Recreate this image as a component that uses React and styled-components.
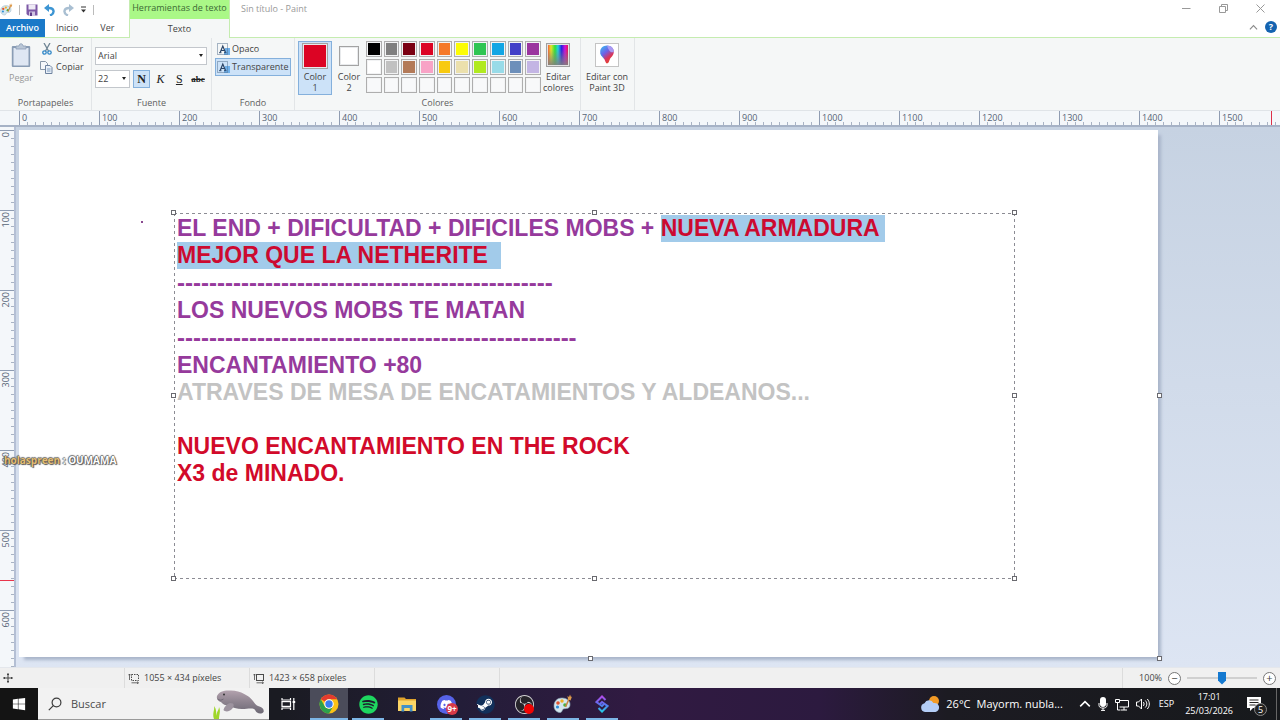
import React, { useState } from 'react';
import styled, { createGlobalStyle, css } from 'styled-components';
import { FaSpotify, FaDiscord, FaSteam, FaWindows } from 'react-icons/fa';
import { SiObsstudio } from 'react-icons/si';

const PALETTE = [
    '#000000', '#7f7f7f', '#7a0012', '#dc0424', '#f5792a', '#fcfc04', '#2fc552', '#12a6e4', '#4340c8', '#9a349f',
    '#ffffff', '#c1c1c1', '#b37a58', '#f8a3c6', '#f8ca10', '#ebe0ac', '#b0ea20', '#98dbe8', '#6d8fba', '#c3b5e4',
];
const EMPTY = Array.from({ length: 10 }, (_, i) => i);
const H_MARKS = Array.from({ length: 16 }, (_, i) => i * 100);
const V_MARKS = Array.from({ length: 7 }, (_, i) => i * 100);

/* ---------- icons ---------- */

const PaintIcon = ({ size }) => (
    <svg width={size} height={size} viewBox="0 0 20 20">
        <path d="M9 4C4 4 1 7.500 1 12c0 4 3 6.500 6 6.500 2.500 0 1.500-2.500 3.500-3.500 2-.8 6 .5 6.500-4C17.400 7 14 4 9 4z" fill="#d5e6ee" stroke="#8aa7b5" strokeWidth=".6" />
        <circle cx="5" cy="9" r="1.800" fill="#e2552f" />
        <circle cx="9" cy="7" r="1.700" fill="#f2b021" />
        <circle cx="4.500" cy="13" r="1.600" fill="#2d8fd8" />
        <circle cx="12" cy="11" r="1.800" fill="#4caf3f" />
        <path d="M12.500 13L16 5" stroke="#c98443" strokeWidth="1.600" />
        <path d="M15 5.500L14.500 2l1.500 1 1-2.500 1 2.500 1-.5-1.500 4z" fill="#dd9a4b" />
    </svg>
);

const SaveIcon = () => (
    <svg width="12" height="12" viewBox="0 0 12 12">
        <path d="M.5.5h11v11H2L.5 10z" fill="#7d58a6" />
        <path d="M2.500.5h7v5h-7z" fill="#eeeaf5" />
        <path d="M3 7.500h6V12H3z" fill="#cfc3e0" />
        <path d="M4 8.500h2V12H4z" fill="#5d3b87" />
    </svg>
);

const UndoIcon = ({ color, flip }) => (
    <svg width="12" height="12" viewBox="0 0 12 12">
        <path d={flip ? 'M6 11.500C1 9.500 1 3.500 8 4' : 'M6 11.500C11 9.500 11 3.500 4 4'} fill="none" stroke={color} strokeWidth="2.400" />
        <path d={flip ? 'M7 0v8l5-4z' : 'M5 0v8L0 4z'} fill={color} />
    </svg>
);

const QuickMenuIcon = () => (
    <svg width="7" height="7" viewBox="0 0 7 7">
        <path d="M1 1h5" stroke="#333" />
        <path d="M1 3.500h5L3.500 6.500z" fill="#333" />
    </svg>
);

const PasteIcon = () => (
    <svg width="20" height="25" viewBox="0 0 20 25">
        <rect x=".8" y="3" width="18.400" height="21" rx="1" fill="#8a9db5" />
        <rect x="2.500" y="5" width="15" height="17.500" fill="#dfe7f3" />
        <path d="M5 6V3h3c0-3 4-3 4 0h3v3z" fill="#b9c6d6" stroke="#8a9db5" strokeWidth=".8" />
    </svg>
);

const CutIcon = () => (
    <svg width="10" height="12" viewBox="0 0 10 12">
        <path d="M2 0l4.500 8M8 0L3.500 8" stroke="#6f8594" strokeWidth="1.300" />
        <circle cx="2.500" cy="9.500" r="1.700" fill="none" stroke="#2f86c6" strokeWidth="1.300" />
        <circle cx="7.500" cy="9.500" r="1.700" fill="none" stroke="#2f86c6" strokeWidth="1.300" />
    </svg>
);

const CopyIcon = () => (
    <svg width="13" height="13" viewBox="0 0 13 13">
        <path d="M.5.5h5l2 2v6h-7z" fill="#f4f7fa" stroke="#8696a8" />
        <path d="M5.500 4.500h4.500l2 2v6H5.500z" fill="#e9f0f8" stroke="#6e83a0" />
        <path d="M7 8h3.500M7 10h3.500" stroke="#7f9dc0" />
    </svg>
);

const TextBackIcon = () => (
    <svg width="13" height="13" viewBox="0 0 13 13">
        <rect x="8" y="5" width="5" height="7" fill="#6fb0ea" />
        <path d="M7 9h3v3H7z" fill="#6fb0ea" />
        <rect x=".5" y=".5" width="10" height="11" fill="none" stroke="#54708f" strokeDasharray="1 1" />
        <path d="M3.200 9.500L5.800 3l2.700 6.500M4 7.500h3.500" fill="none" stroke="#2a4466" strokeWidth="1.200" />
        <path d="M2 9.700h2.500M7 9.700h2.500" stroke="#2a4466" strokeWidth=".9" />
    </svg>
);

const SpectrumIcon = () => (
    <svg width="24" height="24" viewBox="0 0 24 24">
        <defs>
            <linearGradient id="hue">
                <stop offset="0" stopColor="#f4603c" />
                <stop offset=".15" stopColor="#e8e428" />
                <stop offset=".35" stopColor="#2ee03a" />
                <stop offset=".5" stopColor="#23cfe0" />
                <stop offset=".68" stopColor="#2a1ee0" />
                <stop offset=".85" stopColor="#d010d8" />
                <stop offset="1" stopColor="#e81450" />
            </linearGradient>
            <linearGradient id="fade" x2="0" y2="1">
                <stop offset=".2" stopColor="#808080" stopOpacity="0" />
                <stop offset="1" stopColor="#808080" stopOpacity=".9" />
            </linearGradient>
        </defs>
        <rect x=".5" y=".5" width="23" height="23" fill="#e4e4e4" stroke="#a0a0a0" />
        <rect x="2" y="2" width="20" height="20" fill="url(#hue)" />
        <rect x="2" y="2" width="20" height="20" fill="url(#fade)" />
    </svg>
);

const Paint3DIcon = () => (
    <svg width="24" height="24" viewBox="0 0 24 24">
        <defs>
            <linearGradient id="drop" x1="0" y1="0" x2=".6" y2="1">
                <stop offset="0" stopColor="#35c6f4" />
                <stop offset=".45" stopColor="#6b62e8" />
                <stop offset=".75" stopColor="#d8355c" />
                <stop offset="1" stopColor="#e8452b" />
            </linearGradient>
        </defs>
        <rect x=".5" y=".5" width="23" height="23" fill="#fff" stroke="#c4c4c4" />
        <path d="M12 2.500c4 0 6.800 2.800 6.800 6.300 0 3.700-3 5.400-4 7.700-.7 1.700-1.300 4-2.800 4s-1.500-2.500-2.600-4.200C8 14 5.200 12.500 5.200 8.800 5.200 5.300 8 2.500 12 2.500z" fill="url(#drop)" />
        <path d="M12 2.500c4 0 6.800 2.800 6.800 6.300-2 1.500-5 0-6.800-6.300z" fill="#a99af2" />
        <path d="M5.200 9c1 3 3 4.500 4 6.500-2-1.500-4-3.500-4-6.500z" fill="#32a7ee" />
    </svg>
);

const SelectionSizeIcon = ({ dashed }) => (
    <svg width="12" height="11" viewBox="0 0 12 11">
        <rect x="3.500" y="1.500" width="7" height="6" fill="none" stroke="#4a4a4a" strokeDasharray={dashed ? '1.500 1' : undefined} />
        <path d="M1.500 1v6M.3 2.300L1.500 1l1.200 1.300M3.500 9.800h7M9 8.600l1.400 1.200L9 11" fill="none" stroke="#4a4a4a" strokeWidth=".8" />
    </svg>
);

const MoveIcon = () => (
    <svg width="10" height="10" viewBox="0 0 10 10">
        <path d="M5 0v10M0 5h10M4 1.500h2M4 8.500h2M1.500 4v2M8.500 4v2" stroke="#444" />
    </svg>
);

const SearchIcon = () => (
    <svg width="14" height="14" viewBox="0 0 14 14" fill="none" stroke="#3c3c3c" strokeWidth="1.200">
        <circle cx="8.500" cy="5.500" r="4.400" />
        <path d="M5.300 8.700L.8 13.200" />
    </svg>
);

const ManateeIcon = () => (
    <svg width="54" height="30" viewBox="0 0 54 30">
        <defs>
            <linearGradient id="skin" x2="0" y2="1">
                <stop offset="0" stopColor="#b3a2ae" />
                <stop offset=".5" stopColor="#8d838f" />
                <stop offset="1" stopColor="#6c6874" />
            </linearGradient>
        </defs>
        <path d="M3 30c-2-6 1-9 0-13 3 4 2 7 2 10 1-5 3-6 3-9 2 4 0 8 0 12z" fill="#9fd62a" />
        <path d="M6 7C8 2 14 1 20 1.500c10 .5 18 5 22 10.500 2 3 4 5 6.500 5.500 3 1 5 3.500 4 5.500-1.500 2-4.500 2-6.500.5-1.500-1-1.500-2.500-3-3.500-3-1-7 0-12 0-5 0-10-1.500-13-3.500-4 0-6-1-7.500-3C8.500 12.500 5 11 6 7z" fill="url(#skin)" />
        <path d="M19 14c-3 1-6 4-6.500 7 2 2.500 6 1.500 8.500-1 1.500-2 2.500-4 1-5.500z" fill="#9d939f" />
        <circle cx="13" cy="5.500" r="1" fill="#333" />
        <path d="M6.500 10c2 1.500 4 1.500 6 0" fill="none" stroke="#6a6270" strokeWidth=".8" />
    </svg>
);

const TaskViewIcon = () => (
    <svg width="15" height="14" viewBox="0 0 15 14" fill="none" stroke="#fff" strokeWidth="1.200">
        <path d="M1 1v2h8.500V1M1 13v-2h8.500v2" />
        <rect x="1" y="4.600" width="8.500" height="4.800" />
        <path d="M12.800 1v12" />
        <path d="M11.600 5h2.600" strokeWidth="2" />
    </svg>
);

const ChromeIcon = () => (
    <svg width="20" height="20" viewBox="0 0 20 20">
        <circle cx="10" cy="10" r="9.500" fill="#fbc116" />
        <path d="M10 .5a9.500 9.500 0 0 1 8.230 4.750H10a4.750 4.750 0 0 0-4.110 2.370L1.770 5.250A9.500 9.500 0 0 1 10 .5z" fill="#e33b2e" />
        <path d="M1.770 5.250a9.500 9.500 0 0 0 8.230 14.250l4.110-7.120a4.750 4.750 0 0 1-8.220 0z" fill="#2da14c" />
        <circle cx="10" cy="10" r="4.750" fill="#fff" />
        <circle cx="10" cy="10" r="3.700" fill="#3b7ded" />
    </svg>
);

const FolderIcon = () => (
    <svg width="18" height="16" viewBox="0 0 18 16">
        <path d="M0 1.500h6.500l1.500 1.500h10V8H0z" fill="#dfa32c" />
        <path d="M0 4.500h18V15H0z" fill="#fbd566" />
        <path d="M3.500 9h11v6.500h-2.700V12H6.200v3.500H3.500z" fill="#4391c8" />
    </svg>
);

const StreamIcon = () => (
    <svg width="14" height="18" viewBox="0 0 14 18">
        <defs>
            <linearGradient id="stream" x2="0" y2="1">
                <stop offset="0" stopColor="#b04ce8" />
                <stop offset=".5" stopColor="#5d6ff0" />
                <stop offset="1" stopColor="#27c9e8" />
            </linearGradient>
        </defs>
        <path d="M10.500 5L7 1.500 1.500 7l5.500 4 2-2M3.500 13L7 16.500l5.500-5.500L7 7 5 9" fill="none" stroke="url(#stream)" strokeWidth="2" />
    </svg>
);

const WeatherIcon = () => (
    <svg width="20" height="18" viewBox="0 0 20 18">
        <circle cx="14" cy="6" r="5" fill="#f29a26" />
        <path d="M5 17a4.500 4.500 0 0 1-.5-8.800 5 5 0 0 1 9-.2A4.600 4.600 0 0 1 15.500 17z" fill="#b4cdf7" />
    </svg>
);

const MicIcon = () => (
    <svg width="10" height="14" viewBox="0 0 10 14">
        <rect x="2" y="0" width="6" height="10" rx="3" fill="#fff" />
        <path d="M1 6v2.500c0 3.500 8 3.500 8 0V6M5 11v2.500M3 13.400h4" fill="none" stroke="#fff" />
    </svg>
);

const NetworkIcon = () => (
    <svg width="14" height="13" viewBox="0 0 14 13" fill="none" stroke="#fff">
        <path d="M5 2.500h8.500v6.500H4.500M9 9v3M6 12h6" />
        <path d="M.5 1.500h4v3h-4zM2.500 4.500v7.500h3" />
    </svg>
);

const VolumeIcon = () => (
    <svg width="14" height="12" viewBox="0 0 14 12" fill="none" stroke="#fff">
        <path d="M.5 4h2L5.500 1v10l-3-3h-2zM7.300 4c1 1 1 3 0 4M9.300 2.500c2 2 2 5 0 7M11.300 1c2.700 3 2.700 7 0 10" />
    </svg>
);

const NotesIcon = () => (
    <svg width="14" height="14" viewBox="0 0 14 14">
        <path d="M0 0h14v11H6l-3 3v-3H0z" fill="#fff" />
        <path d="M2.500 3h9M2.500 5.500h9M2.500 8h6" stroke="#222" />
    </svg>
);

const MinimizeIcon = () => <svg width="9" height="9" viewBox="0 0 9 9"><path d="M0 4.500h8.500" stroke="#999" /></svg>;
const RestoreIcon = () => (
    <svg width="9" height="9" viewBox="0 0 9 9" fill="none" stroke="#999">
        <path d="M.5 2.500h6v6h-6zM2.500 2.500v-2h6v6h-2" />
    </svg>
);
const CloseIcon = () => <svg width="9" height="9" viewBox="0 0 9 9"><path d="M.5.5l8 8M8.500.5l-8 8" stroke="#999" /></svg>;
const ChevronUp = ({ size, color }) => (
    <svg width={size} height={size} viewBox="0 0 10 10"><path d="M1 7l4-4 4 4" fill="none" stroke={color} strokeWidth="1.300" /></svg>
);

/* ---------- page ---------- */

const App = () => {
    const [font, setFont] = useState('Arial');
    const [size, setSize] = useState('22');
    const [zoom, setZoom] = useState(50);

    return (
        <Window>
            <GlobalStyle />
            <Header>
                <HeaderLeft>
                    <QuickAccess>
                        <PaintIcon size={13} />
                        <QuickLine />
                        <IconButton aria-label="Guardar"><SaveIcon /></IconButton>
                        <IconButton aria-label="Deshacer"><UndoIcon color="#3d95d3" /></IconButton>
                        <IconButton aria-label="Rehacer"><UndoIcon color="#a9bfd2" flip /></IconButton>
                        <IconButton aria-label="Personalizar"><QuickMenuIcon /></IconButton>
                        <QuickLine />
                    </QuickAccess>
                    <Tabs>
                        <FileTab>Archivo</FileTab>
                        <Tab>Inicio</Tab>
                        <Tab>Ver</Tab>
                    </Tabs>
                </HeaderLeft>
                <ContextTabs>
                    <ContextTitle>Herramientas de texto</ContextTitle>
                    <ActiveTab>Texto</ActiveTab>
                </ContextTabs>
                <HeaderRight>
                    <TitleRow>
                        <Title>Sin título - Paint</Title>
                        <WindowButtons>
                            <IconButton aria-label="Minimizar"><MinimizeIcon /></IconButton>
                            <IconButton aria-label="Restaurar"><RestoreIcon /></IconButton>
                            <IconButton aria-label="Cerrar"><CloseIcon /></IconButton>
                        </WindowButtons>
                    </TitleRow>
                    <HelpRow>
                        <IconButton aria-label="Contraer"><ChevronUp size={9} color="#8a8a8a" /></IconButton>
                        <Help>?</Help>
                    </HelpRow>
                </HeaderRight>
            </Header>

            <Ribbon>
                <Group $width={92}>
                    <GroupBody $pad={9}>
                        <BigButton $muted><PasteIcon />Pegar</BigButton>
                        <SmallButtons>
                            <SmallButton><CutIcon />Cortar</SmallButton>
                            <SmallButton><CopyIcon />Copiar</SmallButton>
                        </SmallButtons>
                    </GroupBody>
                    <GroupName>Portapapeles</GroupName>
                </Group>
                <Group $width={120}>
                    <FontBody>
                        <Combo>
                            <Select aria-label="Familia de fuente" value={font} onChange={(ev) => setFont(ev.target.value)}>
                                <option>Arial</option>
                            </Select>
                        </Combo>
                        <FontRow>
                            <Combo $width={35}>
                                <Select aria-label="Tamaño de fuente" value={size} onChange={(ev) => setSize(ev.target.value)}>
                                    <option>22</option>
                                </Select>
                            </Combo>
                            <StyleButton $on $weight="bold">N</StyleButton>
                            <StyleButton $slant="italic">K</StyleButton>
                            <StyleButton $line="underline">S</StyleButton>
                            <StyleButton $line="line-through" $weight="bold" $small>abc</StyleButton>
                        </FontRow>
                    </FontBody>
                    <GroupName>Fuente</GroupName>
                </Group>
                <Group $width={83}>
                    <BackBody>
                        <BackButton><TextBackIcon />Opaco</BackButton>
                        <BackButton $on><TextBackIcon />Transparente</BackButton>
                    </BackBody>
                    <GroupName>Fondo</GroupName>
                </Group>
                <Group $width={286}>
                    <GroupBody $pad={3}>
                        <ColorButton $on>
                            <ColorBox $size={26} $color="#dc0424" />
                            <span>Color</span>
                            <span>1</span>
                        </ColorButton>
                        <ColorButton>
                            <ColorBox $size={20} $color="#fff" />
                            <span>Color</span>
                            <span>2</span>
                        </ColorButton>
                        <Palette>
                            {PALETTE.map((color) => <Swatch key={color} $color={color} aria-label={color} />)}
                            {EMPTY.map((n) => <Swatch key={n} $color="#f8f9fa" aria-label="Vacío" />)}
                        </Palette>
                        <BigButton><SpectrumIcon /><span>Editar</span><span>colores</span></BigButton>
                    </GroupBody>
                    <GroupName>Colores</GroupName>
                </Group>
                <Group $width={54}>
                    <GroupBody $pad={0}>
                        <BigButton $wide><Paint3DIcon /><span>Editar con</span><span>Paint 3D</span></BigButton>
                    </GroupBody>
                </Group>
            </Ribbon>

            <TopRuler>
                {H_MARKS.map((n) => <HMark key={n}>{n}</HMark>)}
                <HCursor />
            </TopRuler>

            <Middle>
                <SideRuler>
                    {V_MARKS.map((n) => <VMark key={n}><span>{n}</span></VMark>)}
                    <VCursor />
                </SideRuler>
                <Workspace>
                    <Sheet>
                        <Speck />
                        <TextFrame>
                            <TextArea contentEditable suppressContentEditableWarning spellCheck={false} role="textbox" aria-label="Texto">
                                <Line>EL END + DIFICULTAD + DIFICILES MOBS + <Selected>NUEVA ARMADURA </Selected></Line>
                                <Line><Selected>MEJOR QUE LA NETHERITE{'  '}</Selected></Line>
                                <Rule>{'-'.repeat(47)}</Rule>
                                <Line>LOS NUEVOS MOBS TE MATAN</Line>
                                <Rule>{'-'.repeat(50)}</Rule>
                                <Line>ENCANTAMIENTO +80</Line>
                                <Line $color="#c3c3c3">ATRAVES DE MESA DE ENCATAMIENTOS Y ALDEANOS...</Line>
                                <Line><br /></Line>
                                <Line $color="#d20a2a">NUEVO ENCANTAMIENTO EN THE ROCK</Line>
                                <Line $color="#d20a2a">X3 de MINADO.</Line>
                            </TextArea>
                            <Handle $x="0%" $y="0%" />
                            <Handle $x="50%" $y="0%" />
                            <Handle $x="100%" $y="0%" />
                            <Handle $x="0%" $y="50%" />
                            <Handle $x="100%" $y="50%" />
                            <Handle $x="0%" $y="100%" />
                            <Handle $x="50%" $y="100%" />
                            <Handle $x="100%" $y="100%" />
                        </TextFrame>
                        <SheetHandle $x="100%" $y="50%" />
                        <SheetHandle $x="50%" $y="100%" />
                        <SheetHandle $x="100%" $y="100%" />
                    </Sheet>
                </Workspace>
                <Chat><ChatName>holaspreen</ChatName> : OUMAMA</Chat>
            </Middle>

            <StatusBar>
                <StatusCell><MoveIcon /></StatusCell>
                <StatusCell><SelectionSizeIcon dashed />1055 × 434 píxeles</StatusCell>
                <StatusCell><SelectionSizeIcon />1423 × 658 píxeles</StatusCell>
                <StatusCell />
                <ZoomCell>
                    <label htmlFor="zoom">100%</label>
                    <RoundButton aria-label="Alejar">−</RoundButton>
                    <Slider id="zoom" type="range" value={zoom} onChange={(ev) => setZoom(ev.target.value)} />
                    <RoundButton aria-label="Acercar">+</RoundButton>
                </ZoomCell>
            </StatusBar>

            <Taskbar>
                <StartButton aria-label="Inicio"><FaWindows size={14} /></StartButton>
                <Search>
                    <SearchIcon />
                    <SearchInput placeholder="Buscar" aria-label="Buscar" />
                    <ManateeIcon />
                </Search>
                <Apps>
                    <AppButton aria-label="Vista de tareas"><TaskViewIcon /></AppButton>
                    <AppButton aria-label="Chrome" $open $active><ChromeIcon /></AppButton>
                    <AppButton aria-label="Spotify" $open><FaSpotify size={19} color="#1ed760" /></AppButton>
                    <AppButton aria-label="Explorador"><FolderIcon /></AppButton>
                    <AppButton aria-label="Discord" $open>
                        <Disc $color="#5662e8"><FaDiscord size={13} color="#fff" /></Disc>
                        <RedBadge>9+</RedBadge>
                    </AppButton>
                    <AppButton aria-label="Steam" $open>
                        <SteamDisc><FaSteam size={19} color="#12305a" /></SteamDisc>
                    </AppButton>
                    <AppButton aria-label="OBS" $open>
                        <Disc $color="#26242a"><SiObsstudio size={19} color="#d2d0d4" /></Disc>
                        <RecDot />
                    </AppButton>
                    <AppButton aria-label="Paint" $open><PaintIcon size={20} /></AppButton>
                    <AppButton aria-label="Streamlabs" $open><StreamIcon /></AppButton>
                </Apps>
                <Tray>
                    <Weather><WeatherIcon /><span>26°C</span><span>Mayorm. nubla...</span></Weather>
                    <TrayIcons>
                        <ChevronUp size={12} color="#fff" />
                        <MicIcon />
                        <NetworkIcon />
                        <VolumeIcon />
                    </TrayIcons>
                    <Lang>ESP</Lang>
                    <Clock><span>17:01</span><span>25/03/2026</span></Clock>
                    <Notes aria-label="Notificaciones"><NotesIcon /><NotesCount>5</NotesCount></Notes>
                </Tray>
            </Taskbar>
        </Window>
    );
};

const GlobalStyle = createGlobalStyle`
    * {
        box-sizing: border-box;
    }
    body {
        margin: 0;
        font-family: "Open Sans", "Noto Sans", sans-serif;
        font-size: 9px;
        line-height: 12px;
        color: #444;
    }
    button, input, select {
        font: inherit;
        color: inherit;
        margin: 0;
        padding: 0;
        border: 0;
        background: none;
    }
    svg {
        display: block;
        flex: none;
    }
`;

const Window = styled.div`
    display: flex;
    flex-direction: column;
    height: 100vh;
    overflow: hidden;
`;

const Header = styled.header`
    display: flex;
    height: 38px;
    flex: none;
    background: #fff;
`;

const HeaderLeft = styled.div`
    display: flex;
    flex-direction: column;
    width: 129px;
    border-bottom: 1px solid #c5ecb0;
`;

const QuickAccess = styled.div`
    display: flex;
    align-items: center;
    gap: 6px;
    height: 19px;
`;

const QuickLine = styled.span`
    width: 1px;
    height: 10px;
    background: #bbb;
`;

const IconButton = styled.button`
    display: flex;
`;

const Tabs = styled.nav`
    display: flex;
    flex: 1;
`;

const Tab = styled.button`
    padding: 0 11px;
`;

const FileTab = styled(Tab)`
    width: 45px;
    padding: 0;
    background: #1a79c8;
    color: #fff;
    font-weight: 600;
`;

const ContextTabs = styled.div`
    display: flex;
    flex-direction: column;
    width: 101px;
    background: #aaf887;
    border: solid #c5ecb0;
    border-width: 0 1px;
`;

const ContextTitle = styled.div`
    height: 19px;
    line-height: 16px;
    text-align: center;
    white-space: nowrap;
    color: #3b6a35;
`;

const ActiveTab = styled(Tab)`
    flex: 1;
    background: #f5f7f7;
`;

const HeaderRight = styled.div`
    display: flex;
    flex-direction: column;
    flex: 1;
    border-bottom: 1px solid #c5ecb0;
`;

const TitleRow = styled.div`
    display: flex;
    align-items: center;
    justify-content: space-between;
    height: 17px;
    padding: 0 15px 0 11px;
`;

const Title = styled.span`
    color: #999;
`;

const WindowButtons = styled.div`
    display: flex;
    gap: 28px;
`;

const HelpRow = styled.div`
    display: flex;
    align-items: center;
    justify-content: flex-end;
    gap: 7px;
    flex: 1;
    padding-right: 3px;
`;

const Help = styled.button`
    width: 12px;
    height: 12px;
    border-radius: 50%;
    background: #1463b0;
    color: #fff;
    font-weight: bold;
`;

const Ribbon = styled.div`
    display: flex;
    flex: none;
    height: 73px;
    background: #f5f7f7;
    border-bottom: 1px solid #e0e4e8;
`;

const Group = styled.section`
    display: flex;
    flex-direction: column;
    flex: none;
    width: ${(p) => p.$width}px;
    padding-top: 2px;
    border-right: 1px solid #e2e5e7;
`;

const GroupBody = styled.div`
    display: flex;
    align-items: flex-start;
    flex: 1;
    padding-left: ${(p) => p.$pad}px;
`;

const GroupName = styled.div`
    text-align: center;
    height: 13px;
    color: #606060;
`;

const BigButton = styled.button`
    display: flex;
    flex-direction: column;
    align-items: center;
    width: ${(p) => (p.$wide ? '52px' : 'auto')};
    padding-top: 3px;
    line-height: 11px;
    color: ${(p) => (p.$muted ? '#999' : '#444')};

    svg {
        margin-bottom: 4px;
    }
`;

const SmallButtons = styled.div`
    display: flex;
    flex-direction: column;
    padding-left: 7px;
`;

const SmallButton = styled.button`
    display: grid;
    grid-template-columns: 13px auto;
    justify-items: center;
    align-items: center;
    gap: 3px;
    height: 18px;
`;

const FontBody = styled.div`
    display: flex;
    flex-direction: column;
    gap: 5px;
    flex: 1;
    padding: 7px 4px 0 3px;
`;

const FontRow = styled.div`
    display: flex;
    gap: 1px;

    > :first-child {
        margin-right: 2px;
    }
`;

const Combo = styled.div`
    position: relative;
    width: ${(p) => (p.$width ? `${p.$width}px` : '100%')};

    &::after {
        content: '';
        position: absolute;
        top: 7px;
        right: 4px;
        border: solid transparent;
        border-width: 3px 2px 0;
        border-top-color: #222;
    }
`;

const Select = styled.select`
    appearance: none;
    display: block;
    width: 100%;
    height: 18px;
    padding-left: 2px;
    background: #fff;
    border: 1px solid #c3c7cc;
    border-radius: 0;
`;

const selected = css`
    background: #cce2f8;
    border-color: #84b0dc;
`;

const StyleButton = styled.button`
    width: 18px;
    height: 18px;
    border: 1px solid transparent;
    font-family: "Liberation Serif", serif;
    font-size: ${(p) => (p.$small ? '9px' : '12px')};
    font-weight: ${(p) => p.$weight || 'normal'};
    font-style: ${(p) => p.$slant || 'normal'};
    text-decoration: ${(p) => p.$line || 'none'};
    color: #222;
    ${(p) => p.$on && selected}
`;

const BackBody = styled.div`
    display: flex;
    flex-direction: column;
    flex: 1;
    padding: 0 3px;
`;

const BackButton = styled.button`
    display: flex;
    align-items: center;
    gap: 2px;
    height: 18px;
    padding-left: 1px;
    border: 1px solid transparent;
    ${(p) => p.$on && selected}
`;

const ColorButton = styled.button`
    display: flex;
    flex-direction: column;
    align-items: center;
    width: 34px;
    height: 54px;
    margin-top: 1px;
    line-height: 11px;
    border: 1px solid transparent;
    ${(p) => p.$on && selected}
`;

const ColorBox = styled.span`
    width: ${(p) => p.$size}px;
    height: ${(p) => p.$size}px;
    margin: ${(p) => (p.$size > 20 ? '1px 0 2px' : '4px 0 5px')};
    background: ${(p) => p.$color};
    border: 1px solid #a3a3a3;
    box-shadow: inset 0 0 0 1px #e8eaec;
`;

const Palette = styled.div`
    display: grid;
    grid-template-columns: repeat(10, 1fr);
    gap: 2px;
    width: 175px;
    margin: 1px 2px 0 0;
`;

const Swatch = styled.button`
    height: 16px;
    border: 1px solid #aeaeae;
    background: ${(p) => p.$color};
    box-shadow: inset 0 0 0 1px #f2f3f4;
`;

const TopRuler = styled.div`
    position: relative;
    display: flex;
    flex: none;
    height: 16px;
    padding-left: 19px;
    overflow: hidden;
    background: #f4f7fa;
    border-bottom: 2px solid #a6b2c6;
`;

const HMark = styled.div`
    flex: none;
    width: 80px;
    padding-left: 2px;
    line-height: 14px;
    color: #566476;
    border-left: 1px solid #8f9cb2;
    background: repeating-linear-gradient(to right, transparent 0 7px, #a9b3c4 7px 8px) 0 100% / 100% 3px no-repeat;
`;

const HCursor = styled.span`
    position: absolute;
    top: 0;
    right: 8px;
    width: 1px;
    height: 100%;
    background: #dc3049;
`;

const Middle = styled.main`
    position: relative;
    display: flex;
    flex: 1;
    min-height: 0;
`;

const SideRuler = styled.div`
    position: relative;
    display: flex;
    flex-direction: column;
    flex: none;
    width: 16px;
    padding-top: 3px;
    overflow: hidden;
    background: #f4f7fa;
    border-right: 2px solid #b4bfd4;
`;

const VMark = styled.div`
    flex: none;
    height: 80px;
    padding-top: 1px;
    color: #566476;
    border-top: 1px solid #8f9cb2;
    background: repeating-linear-gradient(to bottom, transparent 0 7px, #a9b3c4 7px 8px) 100% 0 / 3px 100% no-repeat;

    span {
        display: block;
        writing-mode: vertical-rl;
        transform: rotate(180deg);
    }
`;

const VCursor = styled.span`
    position: absolute;
    bottom: 86px;
    left: 0;
    width: 100%;
    height: 1px;
    background: #e8354c;
`;

const Workspace = styled.div`
    flex: 1;
    display: flex;
    padding: 3px 122px 10px 3px;
    background: linear-gradient(#c6d2e2, #dde5f3);
`;

const Sheet = styled.div`
    position: relative;
    flex: 1;
    background: #fff;
    box-shadow: 4px 4px 3px -1px #a9b5ca;
`;

const Speck = styled.span`
    position: absolute;
    left: 122px;
    top: 91px;
    width: 2px;
    height: 2px;
    background: #8a4a90;
`;

/* the text frame sits freely on the drawing */
const TextFrame = styled.div`
    position: absolute;
    left: 155px;
    top: 83px;
    width: 841px;
    height: 366px;
    --dash: #8c8c94 0 3px, transparent 3px 6px;
    background:
        repeating-linear-gradient(to right, var(--dash)) 0 0 / 100% 1px no-repeat,
        repeating-linear-gradient(to right, var(--dash)) 0 100% / 100% 1px no-repeat,
        repeating-linear-gradient(to bottom, var(--dash)) 0 0 / 1px 100% no-repeat,
        repeating-linear-gradient(to bottom, var(--dash)) 100% 0 / 1px 100% no-repeat;
`;

const TextArea = styled.div`
    padding: 2px 3px;
    outline: none;
    font-family: "Liberation Sans", Arial, sans-serif;
    font-size: 23px;
    font-weight: bold;
    white-space: pre;
`;

const Line = styled.div`
    line-height: 27px;
    color: ${(p) => p.$color || '#963a9c'};
`;

const Rule = styled(Line)`
    font-size: 24px;
    line-height: 28px;
`;

const Selected = styled.span`
    display: inline-block;
    background: #a2cbea;
    color: #cc0a30;
`;

const Handle = styled.span`
    position: absolute;
    left: ${(p) => p.$x};
    top: ${(p) => p.$y};
    width: 5px;
    height: 5px;
    margin: -3px;
    background: #fff;
    border: 1px solid #6a6a70;
`;

const SheetHandle = styled(Handle)`
    margin: -1px;
`;

const Chat = styled.div`
    position: absolute;
    left: 4px;
    top: 326px;
    font-size: 10px;
    line-height: 14px;
    font-weight: bold;
    color: #fff;
    text-shadow: 0 0 1px #444, 1px 1px 1px #555, -1px 0 1px #777, 0 -1px 1px #777;
`;

const ChatName = styled.span`
    color: #e3bd72;
`;

const StatusBar = styled.footer`
    display: flex;
    flex: none;
    height: 21px;
    background: #f0f0f0;
    border-top: 1px solid #e4e7ec;
`;

const StatusCell = styled.div`
    display: flex;
    align-items: center;
    gap: 4px;
    width: 125px;
    padding-left: 3px;
    white-space: nowrap;
    border-right: 1px solid #dcdcdc;
`;

const ZoomCell = styled.div`
    display: flex;
    align-items: center;
    gap: 6px;
    margin-left: auto;
    padding: 0 4px 0 16px;
    border-left: 1px solid #dcdcdc;
`;

const RoundButton = styled.button`
    width: 13px;
    height: 13px;
    line-height: 10px;
    font-size: 11px;
    border: 1px solid #777;
    border-radius: 50%;
    background: #fff;
`;

const Slider = styled.input`
    appearance: none;
    width: 70px;
    height: 14px;
    background: linear-gradient(#d0d0d0, #d0d0d0) 50% 50% / 100% 2px no-repeat;

    &::-webkit-slider-thumb {
        appearance: none;
        width: 8px;
        height: 13px;
        background: #1479d0;
        clip-path: polygon(0 0, 100% 0, 100% 70%, 50% 100%, 0 70%);
    }
`;

const Taskbar = styled.div`
    display: flex;
    flex: none;
    height: 32px;
    color: #fff;
    background: linear-gradient(90deg, #1a1b22 22%, #231d38 36%, #311a42 50%, #2c1a3f 64%, #1c1b22 74%, #17191c 100%);
`;

const StartButton = styled.button`
    display: flex;
    align-items: center;
    justify-content: center;
    width: 38px;
    background: #141414;
`;

const Search = styled.div`
    display: flex;
    align-items: center;
    gap: 9px;
    width: 231px;
    padding: 0 4px 0 10px;
    background: #f2f2f2;
    border-bottom: 1px solid #9a9a9a;
`;

const SearchInput = styled.input`
    flex: 1;
    min-width: 0;
    font-size: 11px;
    line-height: 16px;
    outline: none;

    &::placeholder {
        color: #4c4c4c;
        opacity: 1;
    }
`;

const Apps = styled.div`
    display: flex;
    gap: 1px;

    > :first-child {
        margin-right: 2px;
    }
`;

const AppButton = styled.button`
    position: relative;
    display: flex;
    align-items: center;
    justify-content: center;
    width: 38px;
    background: ${(p) => (p.$active ? '#4b4c5a' : 'transparent')};

    &::after {
        content: '';
        position: absolute;
        bottom: 0;
        left: ${(p) => (p.$active ? 0 : 3)}px;
        right: ${(p) => (p.$active ? 0 : 3)}px;
        height: 2px;
        background: ${(p) => (p.$open ? '#7db6e6' : 'transparent')};
    }
`;

const Disc = styled.span`
    display: flex;
    align-items: center;
    justify-content: center;
    width: 19px;
    height: 19px;
    border-radius: 50%;
    background: ${(p) => p.$color};
`;

const SteamDisc = styled(Disc)`
    background: radial-gradient(#fff 0 8px, transparent 8px);
`;

const RedBadge = styled.span`
    position: absolute;
    right: 7px;
    bottom: 5px;
    width: 12px;
    height: 12px;
    border-radius: 50%;
    background: #d83a48;
    font-size: 8px;
    font-weight: bold;
    line-height: 12px;
`;

const RecDot = styled.span`
    position: absolute;
    right: 9px;
    bottom: 6px;
    width: 10px;
    height: 10px;
    border-radius: 50%;
    background: #f00404;
`;

const Tray = styled.div`
    display: flex;
    align-items: center;
    margin-left: auto;
    padding-right: 3px;
`;

const Weather = styled.div`
    display: flex;
    align-items: center;
    gap: 6px;
    font-size: 11px;
`;

const TrayIcons = styled.div`
    display: flex;
    align-items: center;
    gap: 7px;
    margin-left: 16px;
`;

const Lang = styled.span`
    margin-left: 9px;
`;

const Clock = styled.div`
    display: flex;
    flex-direction: column;
    gap: 2px;
    margin-left: 11px;
    text-align: center;
`;

const Notes = styled.button`
    position: relative;
    display: flex;
    align-items: center;
    align-self: stretch;
    margin-left: 14px;
    padding-right: 15px;
    border-right: 1px solid #666;
`;

const NotesCount = styled.span`
    position: absolute;
    right: 9px;
    bottom: 4px;
    width: 13px;
    height: 13px;
    border: 1px solid #888;
    border-radius: 50%;
    background: #222;
    line-height: 11px;
`;

export default App;
